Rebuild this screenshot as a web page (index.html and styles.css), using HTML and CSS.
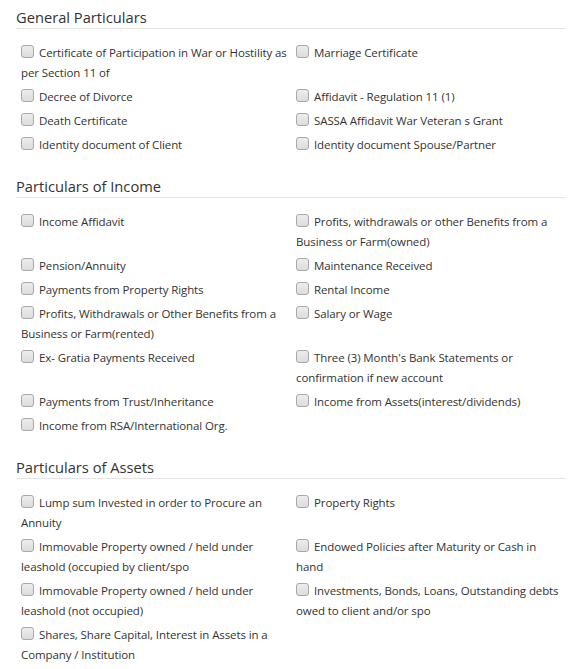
FILE: index.html
```html
<!DOCTYPE html>
<html>
<head>
<meta charset="utf-8">
<link rel="stylesheet" href="styles.css">
</head>
<body>
<div class="page">
  <section class="section">
    <h2 class="heading">General Particulars</h2>
    <div class="grid">
      <label class="item"><input type="checkbox" class="cb">Certificate of Participation in War or Hostility as per Section 11 of</label>
      <label class="item"><input type="checkbox" class="cb">Marriage Certificate</label>
      <label class="item"><input type="checkbox" class="cb">Decree of Divorce</label>
      <label class="item"><input type="checkbox" class="cb">Affidavit - Regulation 11 (1)</label>
      <label class="item"><input type="checkbox" class="cb">Death Certificate</label>
      <label class="item"><input type="checkbox" class="cb">SASSA Affidavit War Veteran s Grant</label>
      <label class="item"><input type="checkbox" class="cb">Identity document of Client</label>
      <label class="item"><input type="checkbox" class="cb">Identity document Spouse/Partner</label>
    </div>
  </section>
  <section class="section">
    <h2 class="heading">Particulars of Income</h2>
    <div class="grid">
      <label class="item"><input type="checkbox" class="cb">Income Affidavit</label>
      <label class="item"><input type="checkbox" class="cb">Profits, withdrawals or other Benefits from a Business or Farm(owned)</label>
      <label class="item"><input type="checkbox" class="cb">Pension/Annuity</label>
      <label class="item"><input type="checkbox" class="cb">Maintenance Received</label>
      <label class="item"><input type="checkbox" class="cb">Payments from Property Rights</label>
      <label class="item"><input type="checkbox" class="cb">Rental Income</label>
      <label class="item"><input type="checkbox" class="cb">Profits, Withdrawals or Other Benefits from a Business or Farm(rented)</label>
      <label class="item"><input type="checkbox" class="cb">Salary or Wage</label>
      <label class="item"><input type="checkbox" class="cb">Ex- Gratia Payments Received</label>
      <label class="item"><input type="checkbox" class="cb">Three (3) Month's Bank Statements or confirmation if new account</label>
      <label class="item"><input type="checkbox" class="cb">Payments from Trust/Inheritance</label>
      <label class="item"><input type="checkbox" class="cb">Income from Assets(interest/dividends)</label>
      <label class="item"><input type="checkbox" class="cb">Income from RSA/International Org.</label>
    </div>
  </section>
  <section class="section">
    <h2 class="heading">Particulars of Assets</h2>
    <div class="grid">
      <label class="item"><input type="checkbox" class="cb">Lump sum Invested in order to Procure an Annuity</label>
      <label class="item"><input type="checkbox" class="cb">Property Rights</label>
      <label class="item"><input type="checkbox" class="cb">Immovable Property owned / held under leashold (occupied by client/spo</label>
      <label class="item"><input type="checkbox" class="cb">Endowed Policies after Maturity or Cash in hand</label>
      <label class="item"><input type="checkbox" class="cb">Immovable Property owned / held under leashold (not occupied)</label>
      <label class="item"><input type="checkbox" class="cb">Investments, Bonds, Loans, Outstanding debts owed to client and/or spo</label>
      <label class="item"><input type="checkbox" class="cb">Shares, Share Capital, Interest in Assets in a Company / Institution</label>
    </div>
  </section>
</div>
</body>
</html>
```
FILE: styles.css
```css
html, body {
  margin: 0;
  padding: 0;
  background: #fff;
}
body {
  font-family: "Open Sans", "Noto Sans", sans-serif;
  color: #333;
}
.page {
  padding: 8px 15px 0 16px;
}
.section {
  margin-top: 22px;
}
.section:first-child {
  margin-top: 0;
}
.heading {
  margin: 0 0 14px;
  font-size: 14.7px;
  font-weight: 400;
  line-height: 18px;
  height: 18px;
  padding-bottom: 2px;
  border-bottom: 1px solid #e5e5e5;
  color: #333;
}
.grid {
  display: grid;
  grid-template-columns: 1fr 1fr;
  row-gap: 4px;
}
.item {
  display: block;
  padding-left: 5px;
  font-size: 11.5px;
  line-height: 20px;
  letter-spacing: -0.1px;
  color: #333;
}
.cb {
  appearance: none;
  -webkit-appearance: none;
  display: inline-block;
  width: 13px;
  height: 13px;
  margin: 0 5px 0 0;
  vertical-align: -1px;
  border: 1px solid #a8a8a8;
  border-radius: 3px;
  background: linear-gradient(#ededed, #dcdcdc);
  box-sizing: border-box;
}
```
